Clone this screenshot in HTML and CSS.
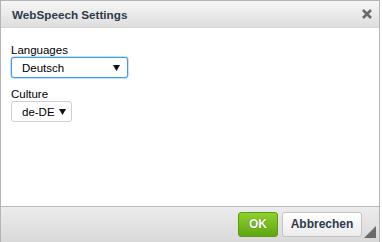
FILE: index.html
```html
<!DOCTYPE html>
<html lang="de">

<head>
    <meta charset="UTF-8">
    <meta name="viewport" content="width=device-width, initial-scale=1.0">
    <title>WebSpeech Settings</title>
    <link rel="stylesheet" href="styles.css">
</head>

<body>
    <div class="dialog">
        <div class="titlebar">
            <span class="title">WebSpeech Settings</span>
            <svg class="close" width="10" height="10" viewBox="0 0 10 10">
                <path d="M1 1 L9 9 M9 1 L1 9" stroke="#6a6a6a" stroke-width="2.6" />
            </svg>
        </div>
        <div class="content">
            <div class="field">
                <div class="label">Languages</div>
                <select class="sel focus">
                    <option>Deutsch</option>
                </select>
            </div>
            <div class="field">
                <div class="label">Culture</div>
                <select class="sel small">
                    <option>de-DE</option>
                </select>
            </div>
        </div>
        <div class="footer">
            <div class="btn ok">OK</div>
            <div class="btn cancel">Abbrechen</div>
            <svg class="grip" width="12" height="12" viewBox="0 0 12 12">
                <path d="M12 0 L12 12 L0 12 Z" fill="#6b6b6b" />
            </svg>
        </div>
    </div>
</body>

</html>
```

FILE: styles.css
```css
body {
    margin: 0;
    background-color: #fff;
    font-family: Arial, "Liberation Sans", sans-serif;
}

.dialog {
    width: 378px;
    height: 241px;
    border: 1px solid #b4b4b4;
    border-bottom: none;
    display: flex;
    flex-direction: column;
}

.titlebar {
    height: 26px;
    padding: 0 7px 0 11px;
    display: flex;
    align-items: center;
    justify-content: space-between;
    background: linear-gradient(#f6f6f6, #dedede);
    border-bottom: 1px solid #d4d4d4;
}

.title {
    font-size: 11.7px;
    font-weight: bold;
    color: #2f3a4a;
}

.content {
    flex: 1;
    padding: 15px 10px 0 10px;
}

.field {
    margin-bottom: 9px;
}

.label {
    font-size: 11.5px;
    line-height: 14px;
    color: #000;
}

.sel {
    -webkit-appearance: none;
    appearance: none;
    display: block;
    height: 21px;
    margin: 0;
    padding: 0 0 0 10px;
    font-family: Arial, "Liberation Sans", sans-serif;
    font-size: 11.5px;
    color: #000;
    background-color: #fff;
    background-image: url("data:image/svg+xml,%3Csvg xmlns='http://www.w3.org/2000/svg' width='7' height='7'%3E%3Cpath d='M0 1 L7 1 L3.5 7 Z' fill='%23111'/%3E%3C/svg%3E");
    background-repeat: no-repeat;
    background-position: right 7px center;
    border: 1px solid #d0d0d0;
    border-radius: 3px;
}

.focus {
    width: 117px;
    border-color: #3e9bf0;
    box-shadow: 0 0 0 0.5px #8cc4f6;
}

.small {
    width: 61px;
    background-position: right 5px center;
}

.footer {
    height: 35px;
    border-top: 1px solid #b9b9b9;
    background: linear-gradient(#ececec, #d9d9d9);
    display: flex;
    align-items: center;
    justify-content: flex-end;
    padding-right: 17px;
    position: relative;
}

.btn {
    height: 23px;
    line-height: 23px;
    border-radius: 3px;
    font-size: 12px;
    font-weight: bold;
    text-align: center;
    margin-left: 4px;
    margin-bottom: 1px;
}

.ok {
    width: 38px;
    color: #fff;
    background: linear-gradient(#8fd12a, #5fa512);
    border: 1px solid #5c9b16;
    text-shadow: 0 0 1px #3a6a08;
}

.cancel {
    width: 78px;
    color: #2f3a4a;
    background: linear-gradient(#ffffff, #ececec);
    border: 1px solid #c4c4c4;
}

.grip {
    position: absolute;
    right: 3px;
    bottom: 4px;
}
```
